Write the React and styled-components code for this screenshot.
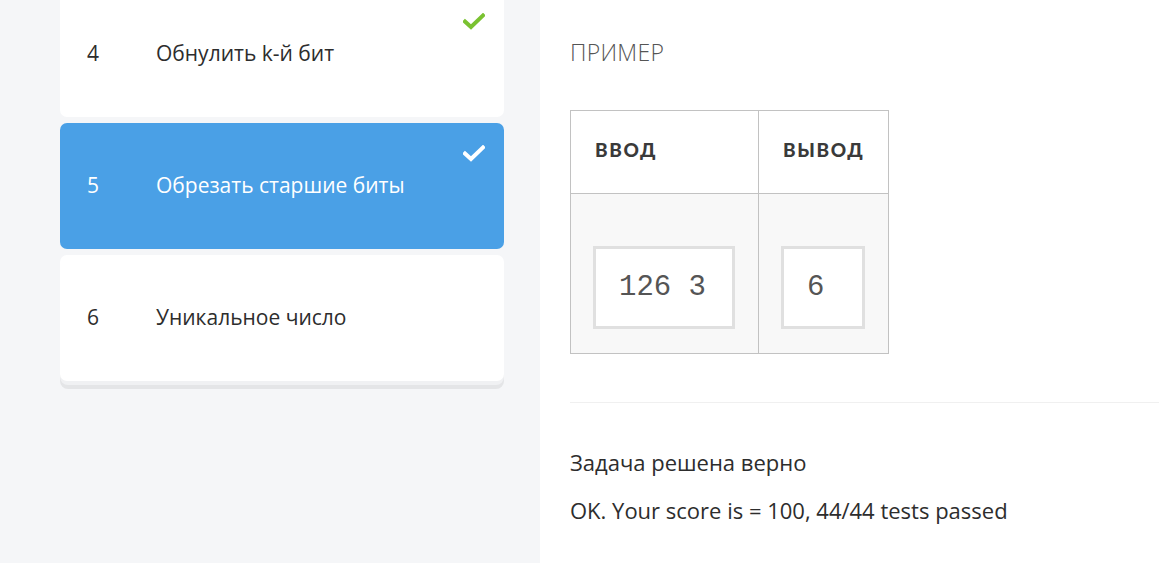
import React from "react";
import styled, { createGlobalStyle } from "styled-components";

const Global = createGlobalStyle`
  html, body { margin: 0; padding: 0; }
  body {
    font-family: "Open Sans", "Noto Sans", sans-serif;
    background: #ffffff;
    overflow: hidden;
  }
`;

const Page = styled.div`
  display: flex;
  width: 1159px;
  height: 563px;
  overflow: hidden;
`;

const Sidebar = styled.aside`
  width: 540px;
  flex: none;
  background: #f5f6f8;
  padding: 0 36px 0 60px;
  box-sizing: border-box;
`;

const TaskList = styled.div`
  display: flex;
  flex-direction: column;
  gap: 6px;
  margin-top: -9px;
  border-radius: 8px;
  box-shadow: 0 4px 0 #f0f1f3, 0 8px 0 #e4e5e7;
`;

const TaskCard = styled.div`
  position: relative;
  height: 126px;
  display: flex;
  align-items: center;
  padding-left: 27px;
  border-radius: 7px;
  background: ${(p) => (p.$active ? "#4aa0e6" : "#ffffff")};
  color: ${(p) => (p.$active ? "#ffffff" : "#2d2d2d")};
  font-size: 21px;
  line-height: 1;
  padding-bottom: 2px;
  box-sizing: border-box;
`;

const TaskNum = styled.span`
  width: 69px;
  flex: none;
`;

const TaskTitle = styled.span``;

const Check = styled.svg`
  position: absolute;
  top: 22px;
  right: 19px;
  width: 22px;
  height: 17px;
`;

const Content = styled.main`
  flex: 1;
  padding: 38px 0 0 30px;
  background: #ffffff;
`;

const Heading = styled.div`
  font-size: 23px;
  font-weight: 300;
  color: #555555;
  letter-spacing: 0.3px;
  text-transform: uppercase;
  line-height: 28px;
  margin-bottom: 44px;
`;

const Table = styled.table`
  border-collapse: collapse;
`;

const HeadCell = styled.th`
  border: 1px solid #c2c2c2;
  height: 83px;
  padding: 0 24px 5px;
  box-sizing: border-box;
  text-align: left;
  font-family: Lato, "Open Sans", sans-serif;
  font-size: 19px;
  font-weight: 900;
  letter-spacing: 1.6px;
  color: #3a3a3a;
  text-transform: uppercase;
  background: #ffffff;
`;

const BodyCell = styled.td`
  border: 1px solid #c2c2c2;
  background: #f8f8f8;
  padding: 52px 23px 24px 22px;
  vertical-align: top;
`;

const Pre = styled.pre`
  margin: 0;
  box-sizing: border-box;
  width: ${(p) => p.$w}px;
  height: 83px;
  border: 3px solid #e0e0e0;
  background: #ffffff;
  display: flex;
  align-items: center;
  padding-left: 23px;
  font-family: "Liberation Mono", "Courier New", monospace;
  font-size: 29px;
  color: #555555;
  font-weight: 400;
`;

const Divider = styled.hr`
  border: none;
  border-top: 1px solid #f0f0f0;
  margin: 48px 0 0 0;
`;

const Result = styled.div`
  margin-top: 44px;
  font-size: 22px;
  line-height: 30px;
  color: #2d2d2d;
  display: flex;
  flex-direction: column;
  gap: 18px;
`;

const CheckIcon = ({ color }) => (
  <Check viewBox="0 0 22 17">
    <polyline
      points="2,8.5 8,14 20,2.5"
      fill="none"
      stroke={color}
      strokeWidth="4"
      strokeLinecap="square"
    />
  </Check>
);

const tasks = [
  { n: 4, title: "Обнулить k-й бит", done: true },
  { n: 5, title: "Обрезать старшие биты", done: true, active: true },
  { n: 6, title: "Уникальное число" },
];

export default function App() {
  return (
    <Page>
      <Global />
      <Sidebar>
        <TaskList>
          {tasks.map((t) => (
            <TaskCard key={t.n} $active={t.active}>
              <TaskNum>{t.n}</TaskNum>
              <TaskTitle>{t.title}</TaskTitle>
              {t.done && <CheckIcon color={t.active ? "#ffffff" : "#7ac231"} />}
            </TaskCard>
          ))}
        </TaskList>
      </Sidebar>
      <Content>
        <Heading>Пример</Heading>
        <Table>
          <thead>
            <tr>
              <HeadCell>Ввод</HeadCell>
              <HeadCell>Вывод</HeadCell>
            </tr>
          </thead>
          <tbody>
            <tr>
              <BodyCell>
                <Pre $w={142}>126 3</Pre>
              </BodyCell>
              <BodyCell>
                <Pre $w={84}>6</Pre>
              </BodyCell>
            </tr>
          </tbody>
        </Table>
        <Divider />
        <Result>
          <div>Задача решена верно</div>
          <div>OK. Your score is = 100, 44/44 tests passed</div>
        </Result>
      </Content>
    </Page>
  );
}
